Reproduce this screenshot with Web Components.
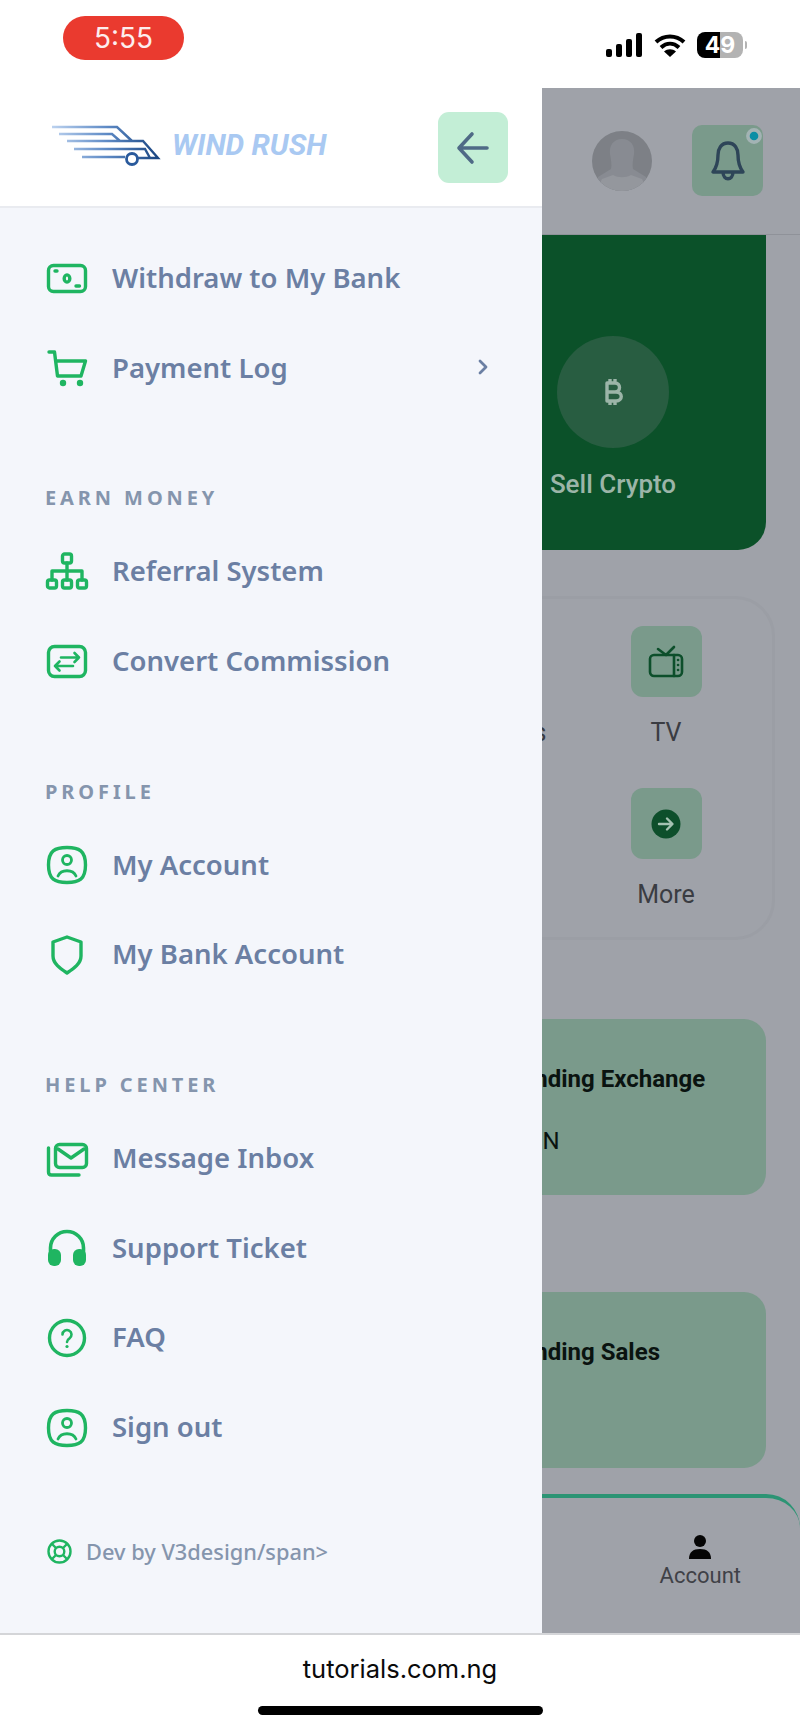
<!DOCTYPE html>
<html lang="en">
<head>
<meta charset="utf-8">
<title>Wind Rush</title>
<style>
  html, body { margin: 0; padding: 0; background: #fff; }
  body { width: 800px; height: 1730px; overflow: hidden; font-family: "Inter", "Liberation Sans", sans-serif; }
</style>
</head>
<body>
<phone-screen>
  <status-bar slot="status"></status-bar>
  <page-behind slot="page"></page-behind>
  <side-drawer slot="drawer">
    <drawer-section>
      <drawer-item icon="money">Withdraw to My Bank</drawer-item>
      <drawer-item icon="cart" chevron>Payment Log</drawer-item>
    </drawer-section>
    <drawer-section label="EARN MONEY">
      <drawer-item icon="tree">Referral System</drawer-item>
      <drawer-item icon="convert">Convert Commission</drawer-item>
    </drawer-section>
    <drawer-section label="PROFILE">
      <drawer-item icon="user">My Account</drawer-item>
      <drawer-item icon="shield">My Bank Account</drawer-item>
    </drawer-section>
    <drawer-section label="HELP CENTER">
      <drawer-item icon="mail">Message Inbox</drawer-item>
      <drawer-item icon="headset">Support Ticket</drawer-item>
      <drawer-item icon="help">FAQ</drawer-item>
      <drawer-item icon="user">Sign out</drawer-item>
    </drawer-section>
  </side-drawer>
  <browser-bar slot="browser">tutorials.com.ng</browser-bar>
</phone-screen>

<script>
  // Green drawer icons, drawn on a 44px box
  const ICONS = {
    money: `<rect x="3.500" y="9.500" width="37" height="26" rx="5"/>
      <ellipse cx="22" cy="22.500" rx="2.800" ry="3.600"/><path d="M10 15h2M31 30h3.500"/>`,
    cart: `<path d="M4 7h5.500l3 24H36l4.500-15H11"/>
      <circle cx="18" cy="38" r="3.200" fill="#1fb561" stroke="none"/><circle cx="35" cy="38" r="3.200" fill="#1fb561" stroke="none"/>`,
    tree: `<rect x="17.500" y="5" width="9" height="9" rx="2"/>
      <path d="M22 14v17M7 31v-9h30v9"/>
      <rect x="2.500" y="31" width="9" height="8" rx="2"/><rect x="17.500" y="31" width="9" height="8" rx="2"/><rect x="32.500" y="31" width="9" height="8" rx="2"/>`,
    convert: `<rect x="3.500" y="7.500" width="37" height="30" rx="6"/>
      <path d="M16 18.500h18M29.500 14l4.500 4.500-4.500 4.500M28 27H10M14.500 22.500L10 27l4.500 4.500" stroke-width="2.600"/>`,
    user: `<path d="M22 5.500c12 0 18.500 3 18.500 17.500S34 40.500 22 40.500 3.500 37.500 3.500 23 10 5.500 22 5.500z"/>
      <circle cx="22" cy="18" r="4.500" stroke-width="2.800"/><path d="M13 34c3-7 15-7 18 0" stroke-width="2.800"/>`,
    shield: `<path d="M22 5l14 5v14c0 8-8 13-14 17-6-4-14-9-14-17V10z"/>`,
    mail: `<rect x="10.500" y="8.500" width="31" height="23" rx="4"/>
      <path d="M13 13l13 9 13-9M3.500 12v24q0 3 3 3H34"/>`,
    headset: `<path d="M5.500 30v-7a16.500 16.500 0 0 1 33 0v7" stroke-width="3.600"/>
      <rect x="3" y="24" width="13" height="17" rx="6" fill="#1fb561" stroke="none"/>
      <rect x="28" y="24" width="13" height="17" rx="6" fill="#1fb561" stroke="none"/>`,
    help: `<circle cx="22" cy="23" r="17.500"/>
      <path d="M17.500 19.500a4.500 4.500 0 1 1 7 3.800c-1.600 1-2.500 1.700-2.500 3.700" stroke-width="2.600"/>
      <circle cx="22" cy="31.500" r="1.600" fill="#1fb561" stroke="none"/>`
  };

  class PhoneScreen extends HTMLElement {
    constructor() {
      super();
      this.attachShadow({mode: 'open'});
      this.shadowRoot.innerHTML = `
        <style>
          :host { display: flex; flex-direction: column; width: 800px; height: 1730px; }
          .main { position: relative; flex: 1; overflow: hidden; display: flex; }
          ::slotted([slot=drawer]) { position: absolute; left: 0; top: -88px; }
        </style>
        <slot name="status"></slot>
        <div class="main">
          <slot name="page"></slot>
          <slot name="drawer"></slot>
        </div>
        <slot name="browser"></slot>
      `;
    }
  }

  class StatusBar extends HTMLElement {
    constructor() {
      super();
      this.attachShadow({mode: 'open'});
      this.shadowRoot.innerHTML = `
        <style>
          :host { display: flex; align-items: flex-start; justify-content: space-between; height: 88px; padding: 16px 53px 0 63px; box-sizing: border-box; background: #fff; }
          .time { width: 121px; height: 44px; border-radius: 22px; background: #ea3a2f; color: #fdeeee; font: 400 28px/44px "Inter", sans-serif; text-align: center; }
          .right { display: flex; align-items: center; gap: 11px; margin-top: 16px; height: 26px; }
          .battery { display: flex; width: 46px; height: 26px; border-radius: 8px; overflow: hidden; background: linear-gradient(90deg, #000 50%, #b3b3b3 50%); color: #fff; font: 700 23px/26px "Inter", sans-serif; justify-content: center; }
          .nub { width: 2px; height: 8px; background: #b3b3b3; border-radius: 0 2px 2px 0; margin-left: -9px; }
        </style>
        <div class="time">5:55</div>
        <div class="right">
          <svg width="37" height="24" viewBox="0 0 37 24" fill="#000">
            <rect x="0" y="16" width="6" height="8" rx="2"/><rect x="10" y="11" width="6" height="13" rx="2"/>
            <rect x="20" y="6" width="6" height="18" rx="2"/><rect x="30" y="0" width="6" height="24" rx="2"/>
          </svg>
          <svg width="32" height="24" viewBox="0 0 32 24" fill="none" stroke="#000" stroke-width="4">
            <path d="M2 9c8-7.500 20-7.500 28 0M7 14.500c5.500-5 12.500-5 18 0"/>
            <path d="M16 24l-6-5.500c3.500-3 8.500-3 12 0z" fill="#000" stroke="none"/>
          </svg>
          <div class="battery">49</div>
          <div class="nub"></div>
        </div>
      `;
    }
  }

  class WindLogo extends HTMLElement {
    constructor() {
      super();
      this.attachShadow({mode: 'open'});
      this.shadowRoot.innerHTML = `
        <style>
          :host { display: flex; align-items: center; gap: 10px; }
          span { font: italic 700 29.500px/1 "Roboto", sans-serif; color: #a9c9f2; margin-top: -3px; }
        </style>
        <svg width="110" height="46" viewBox="52 127 110 46" fill="none" stroke="url(#wing)" stroke-width="2.400">
          <defs>
            <linearGradient id="wing" gradientUnits="userSpaceOnUse" x1="52" y1="0" x2="160" y2="0">
              <stop offset="0" stop-color="#bcd2ef"/><stop offset=".5" stop-color="#5f8bc6"/><stop offset="1" stop-color="#17437f"/>
            </linearGradient>
          </defs>
          <path d="M52 130h65l15 14M59 137h53l8 7M67 144h76l15 17h-20M74 152h71l5 9M82 160h43"/>
          <circle cx="132" cy="162" r="5.500" stroke="#2a5a9c" stroke-width="2.800"/>
        </svg>
        <span>WIND RUSH</span>
      `;
    }
  }

  class SideDrawer extends HTMLElement {
    constructor() {
      super();
      this.attachShadow({mode: 'open'});
      this.shadowRoot.innerHTML = `
        <style>
          :host { display: flex; flex-direction: column; width: 542px; height: 1633px; background: #f4f6fb; }
          .head { display: flex; align-items: center; justify-content: space-between; box-sizing: border-box; height: 120px; margin-top: 88px; padding: 0 34px 0 52px; background: #fff; border-bottom: 2px solid #e9ebf0; }
          .back { display: flex; align-items: center; justify-content: center; width: 70px; height: 71px; margin-top: 1px; border-radius: 11px; background: #c3eed6; }
          nav { display: flex; flex-direction: column; padding: 25px 0 0 0; }
          .dev { display: flex; align-items: center; gap: 14px; padding-left: 47px; margin-top: 67px; color: #8595ad; font: 500 21.800px/26px "Noto Sans", sans-serif; }
        </style>
        <div class="head">
          <wind-logo></wind-logo>
          <div class="back">
            <svg width="34" height="34" viewBox="0 0 34 34" fill="none" stroke="#4f6a86" stroke-width="3.600" stroke-linecap="round" stroke-linejoin="round">
              <path d="M31 17H4M16 3L3 17l13 14"/>
            </svg>
          </div>
        </div>
        <nav><slot></slot></nav>
        <div class="dev">
          <svg width="25" height="25" viewBox="0 0 25 25" fill="none" stroke="#1fb561" stroke-width="2.400">
            <circle cx="12.500" cy="12.500" r="11"/><circle cx="12.500" cy="12.500" r="4.800"/>
            <path d="M5 5l4 4M20 5l-4 4M5 20l4-4M20 20l-4-4"/>
          </svg>
          <span>Dev by V3design/span&gt;</span>
        </div>
      `;
    }
  }

  class DrawerSection extends HTMLElement {
    constructor() {
      super();
      this.attachShadow({mode: 'open'});
      const label = this.getAttribute('label');
      this.shadowRoot.innerHTML = `
        <style>
          :host { display: block; }
          :host(:not(:first-child)) { margin-top: 73px; }
          .label { height: 26px; margin: 0 0 15px 45px; color: #8595ad; font: 700 20px/26px "Noto Sans", sans-serif; letter-spacing: 3.900px; }
        </style>
        ${label ? `<div class="label">${label}</div>` : ''}
        <slot></slot>
      `;
    }
  }

  class DrawerItem extends HTMLElement {
    constructor() {
      super();
      this.attachShadow({mode: 'open'});
      const chevron = this.hasAttribute('chevron') ? `
        <svg class="more" width="12" height="16" viewBox="0 0 12 16" fill="none" stroke="#6b7fa3" stroke-width="2.800" stroke-linecap="round" stroke-linejoin="round"><path d="M3 2l6 6-6 6"/></svg>` : '';
      this.shadowRoot.innerHTML = `
        <style>
          :host { display: flex; align-items: center; gap: 23px; height: 89.670px; padding-left: 45px; padding-right: 53px; color: #6b7fa3; font: 600 27.500px/1 "Noto Sans", sans-serif; }
          svg.icon { flex: none; }
          .text { flex: 1; }
        </style>
        <svg class="icon" width="44" height="44" viewBox="0 0 44 44" fill="none" stroke="#1fb561" stroke-width="3.400" stroke-linecap="round" stroke-linejoin="round">${ICONS[this.getAttribute('icon')]}</svg>
        <span class="text"><slot></slot></span>
        ${chevron}
      `;
    }
  }

  class PageBehind extends HTMLElement {
    constructor() {
      super();
      this.attachShadow({mode: 'open'});
      this.shadowRoot.innerHTML = `
        <style>
          :host { display: flex; flex-direction: column; width: 800px; height: 1545px; background: #9fa2a9; font-family: "Inter", sans-serif; }
          .top { display: flex; align-items: center; justify-content: flex-end; gap: 40px; box-sizing: border-box; height: 147px; padding: 0 37px 0 0; border-bottom: 1px solid #8f9299; }
          .bell { position: relative; display: flex; align-items: center; justify-content: center; width: 71px; height: 71px; border-radius: 10px; background: #7a9a8b; }
          .bell i { position: absolute; right: -2px; top: 0; width: 12px; height: 12px; border-radius: 50%; background: #0b8ea5; border: 5px solid #a3b3b4; box-sizing: content-box; transform: scale(.72); }
          .trade { display: flex; box-sizing: border-box; height: 316px; margin-right: 34px; padding-left: 500px; border-radius: 0 0 28px 28px; background: #0b5129; }
          .sell { display: flex; flex-direction: column; align-items: center; width: 226px; padding-top: 101px; color: #9cb5a8; font: 500 26px/30px "Roboto", sans-serif; }
          .sell div { display: flex; align-items: center; justify-content: center; width: 112px; height: 112px; border-radius: 50%; background: #285d41; margin-bottom: 21px; }
          .services { display: grid; grid-template-columns: repeat(2, 160px); justify-content: end; align-content: start; box-sizing: border-box; height: 344px; margin: 46px 25px 0 0; padding: 27px 26px 0 0; border: 3px solid #9b9ea5; border-radius: 40px; color: #3a3c42; font: 400 25px/30px "Roboto", sans-serif; text-align: center; }
          .tile { width: 71px; height: 71px; margin: 0 auto 21px; border-radius: 12px; background: #7a9a8b; display: flex; align-items: center; justify-content: center; }
          .cell { height: 162px; }
          .pending { box-sizing: border-box; height: 176px; margin-right: 34px; padding: 45px 0 0 506px; border-top-right-radius: 22px; border-bottom-right-radius: 22px; background: #7a9a8b; color: #0a1310; }
          .pending b { display: block; font: 700 24px/30px "Roboto", sans-serif; }
          .pending span { display: block; margin: 32px 0 0 3px; font: 400 24px/30px "Roboto", sans-serif; }
          .tabs { display: flex; justify-content: flex-end; box-sizing: border-box; height: 139px; margin-top: 26px; padding: 37px 59px 0 0; border-top: 4px solid #2c9474; border-top-right-radius: 34px; color: #3f4147; font: 400 22px/26px "Roboto", sans-serif; }
          .tab { display: flex; flex-direction: column; align-items: center; gap: 4px; }
        </style>
        <div class="top">
          <svg width="60" height="60" viewBox="0 0 60 60">
            <defs><clipPath id="round"><circle cx="30" cy="30" r="30"/></clipPath></defs>
            <g clip-path="url(#round)">
              <rect width="60" height="60" fill="#7d8086"/>
              <path d="M30 8c9 0 13 7 12 15-1 6-2 11-1 15l13 8v14H6V46l13-8c1-4 0-9-1-15-1-8 3-15 12-15z" fill="#888b92"/>
              <path d="M4 60l6-12 11-4c5 3 13 3 18 0l11 4 6 12z" fill="#94979d"/>
            </g>
          </svg>
          <div class="bell">
            <svg width="36" height="42" viewBox="0 0 36 42" fill="none" stroke="#2e4558" stroke-width="3.400" stroke-linecap="round" stroke-linejoin="round">
              <path d="M18 3c-7 0-10 6-10 12 0 8-2 13-5 17h30c-3-4-5-9-5-17 0-6-3-12-10-12zM13 32c0 9 10 9 10 0"/>
            </svg>
            <i></i>
          </div>
        </div>
        <div class="trade">
          <div class="sell">
            <div>
              <svg width="20" height="28" viewBox="0 0 20 28" fill="none" stroke="#9cb5a8" stroke-width="3.400" stroke-linejoin="round">
                <path d="M4 5h8c6 0 6 9 0 9H4h9c7 0 7 9 0 9H4zM7 1v4M12 1v4M7 23v4M12 23v4"/>
              </svg>
            </div>
            Sell Crypto
          </div>
        </div>
        <div class="services">
          <div class="cell"><div class="tile"></div>Tickets</div>
          <div class="cell">
            <div class="tile">
              <svg width="36" height="34" viewBox="0 0 36 34" fill="none" stroke="#0d4f2b" stroke-width="2.600" stroke-linecap="round" stroke-linejoin="round">
                <rect x="2" y="10" width="32" height="21" rx="4"/><path d="M10 4l8 6 8-8M26 10v21"/>
                <path d="M30 15h.1M30 20h.1M30 25h.1"/>
              </svg>
            </div>
            TV
          </div>
          <div class="cell"></div>
          <div class="cell">
            <div class="tile">
              <svg width="30" height="30" viewBox="0 0 30 30">
                <circle cx="15" cy="15" r="14.500" fill="#0d4f2b"/>
                <path d="M8 15h13M16 9.500l5.500 5.500-5.500 5.500" fill="none" stroke="#a5c2b2" stroke-width="2.400" stroke-linecap="round" stroke-linejoin="round"/>
              </svg>
            </div>
            More
          </div>
        </div>
        <div class="pending" style="margin-top:79px"><b>Pending Exchange</b><span>NGN</span></div>
        <div class="pending" style="margin-top:97px"><b>Pending Sales</b></div>
        <div class="tabs">
          <div class="tab">
            <svg width="22" height="24" viewBox="0 0 22 24" fill="#050505">
              <circle cx="11" cy="6" r="6"/><path d="M0 24c0-7 4-10 11-10s11 3 11 10z"/>
            </svg>
            Account
          </div>
        </div>
      `;
    }
  }

  class BrowserBar extends HTMLElement {
    constructor() {
      super();
      this.attachShadow({mode: 'open'});
      this.shadowRoot.innerHTML = `
        <style>
          :host { display: flex; flex-direction: column; align-items: center; box-sizing: border-box; height: 97px; padding-top: 17px; background: #fff; border-top: 2px solid #d4d5d8; color: #0a0a0a; font: 400 25.500px/34px "Inter", sans-serif; }
          .home { width: 285px; height: 9px; margin-top: 20px; border-radius: 5px; background: #000; }
        </style>
        <slot></slot>
        <div class="home"></div>
      `;
    }
  }

  customElements.define('phone-screen', PhoneScreen);
  customElements.define('status-bar', StatusBar);
  customElements.define('wind-logo', WindLogo);
  customElements.define('side-drawer', SideDrawer);
  customElements.define('drawer-section', DrawerSection);
  customElements.define('drawer-item', DrawerItem);
  customElements.define('page-behind', PageBehind);
  customElements.define('browser-bar', BrowserBar);
</script>
</body>
</html>
